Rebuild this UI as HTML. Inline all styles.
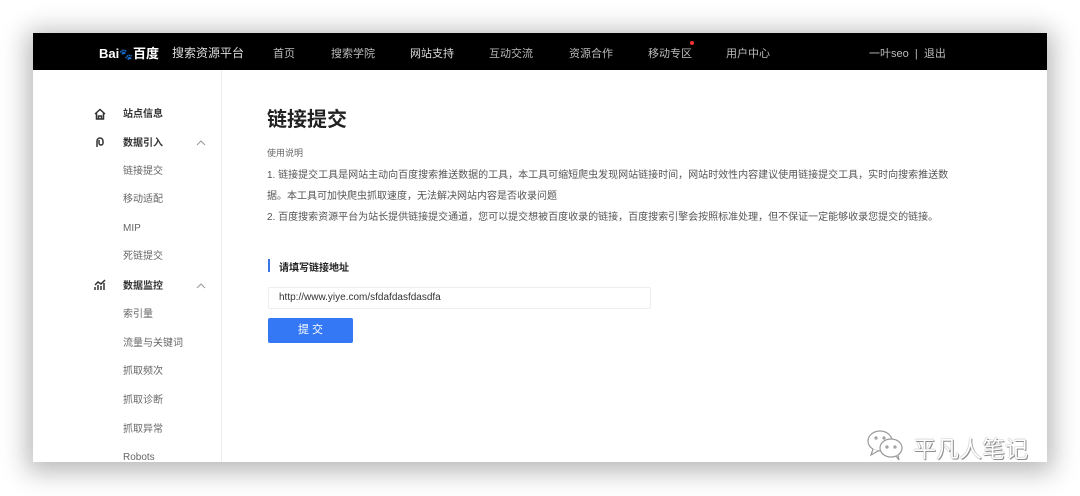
<!DOCTYPE html>
<html><head><meta charset="utf-8"><style>
*{margin:0;padding:0;box-sizing:border-box}
body{width:1080px;height:496px;background:#fff;font-family:"Liberation Sans","Noto Sans CJK SC",sans-serif;position:relative;overflow:hidden}
.box{position:absolute;left:33px;top:33px;width:1014px;height:429px;background:#fff;box-shadow:0 4px 24px 6px rgba(0,0,0,.28);overflow:hidden}
.nav{position:absolute;left:0;top:0;width:100%;height:37px;background:#000;color:#bbb;font-size:11px}
.nav span{position:absolute;top:12px;white-space:nowrap}
.side{position:absolute;left:0;top:39px;width:189px;height:392px;border-right:1px solid #eee}
.side div,.side svg{position:absolute;font-size:10px;color:#666;white-space:nowrap;line-height:14px}
.side .h{font-weight:bold;color:#333}
.main{position:absolute;left:189px;top:37px}
.t{position:absolute;white-space:nowrap}
</style></head><body>
<div class="box">
 <div class="nav">
  <span style="left:66px;top:10px;color:#fff;font-weight:bold;font-size:13px">Bai<span style="position:static;font-size:11px">🐾</span>百度</span>
  <span style="left:139px;color:#ddd;font-size:12px;top:11px">搜索资源平台</span>
  <span style="left:240px">首页</span>
  <span style="left:298px">搜索学院</span>
  <span style="left:377px;color:#ddd">网站支持</span>
  <span style="left:456px">互动交流</span>
  <span style="left:536px">资源合作</span>
  <span style="left:615px">移动专区</span>
  <span style="left:657px;top:8px;width:4px;height:4px;border-radius:2px;background:#e33"></span>
  <span style="left:693px">用户中心</span>
  <span style="left:836px">一叶seo &nbsp;|&nbsp; 退出</span>
 </div>
 <div class="side" style="border-right:none"></div>
 <div style="position:absolute;left:188px;top:37px;width:1px;height:392px;background:#eee"></div>
 <div class="side">
  <svg style="left:60px;top:35px" width="14" height="14" viewBox="0 0 14 14" fill="none" stroke="#333" stroke-width="1.5"><path d="M2 7L7 2.5 12 7M3.5 6v6h7V6"/><path d="M5.5 12V9h3v3"/></svg>
  <div class="h" style="left:90px;top:36px">站点信息</div>
  <svg style="left:60px;top:63px" width="14" height="14" viewBox="0 0 14 14" fill="none" stroke="#333" stroke-width="1.5"><path d="M4 12V6a3 3 0 0 1 6 0v2a2 2 0 0 1-4 0V5"/></svg>
  <div class="h" style="left:90px;top:65px">数据引入</div>
  <svg style="left:163px;top:67px" width="10" height="8" viewBox="0 0 10 8" fill="none" stroke="#999" stroke-width="1"><path d="M1 6l4-4 4 4"/></svg>
  <div style="left:90px;top:93px">链接提交</div>
  <div style="left:90px;top:121px">移动适配</div>
  <div style="left:90px;top:150px">MIP</div>
  <div style="left:90px;top:178px">死链提交</div>
  <svg style="left:60px;top:206px" width="14" height="14" viewBox="0 0 14 14" fill="none" stroke="#333" stroke-width="1.5"><path d="M2 12V9M5 12V7M8 12V8M11 12V5M2 7l3-3 3 2 4-4"/></svg>
  <div class="h" style="left:90px;top:208px">数据监控</div>
  <svg style="left:163px;top:210px" width="10" height="8" viewBox="0 0 10 8" fill="none" stroke="#999" stroke-width="1"><path d="M1 6l4-4 4 4"/></svg>
  <div style="left:90px;top:236px">索引量</div>
  <div style="left:90px;top:265px">流量与关键词</div>
  <div style="left:90px;top:293px">抓取频次</div>
  <div style="left:90px;top:322px">抓取诊断</div>
  <div style="left:90px;top:351px">抓取异常</div>
  <div style="left:90px;top:379px">Robots</div>
 </div>
 <div class="main">
  <div class="t" style="left:45px;top:33px;font-size:20px;font-weight:bold;color:#222">链接提交</div>
  <div class="t" style="left:45px;top:76px;font-size:9px;color:#666">使用说明</div>
  <div class="t" style="left:45px;top:96px;font-size:10px;color:#555">1. 链接提交工具是网站主动向百度搜索推送数据的工具，本工具可缩短爬虫发现网站链接时间，网站时效性内容建议使用链接提交工具，实时向搜索推送数</div>
  <div class="t" style="left:45px;top:117px;font-size:10px;color:#555">据。本工具可加快爬虫抓取速度，无法解决网站内容是否收录问题</div>
  <div class="t" style="left:45px;top:138px;font-size:10px;color:#555">2. 百度搜索资源平台为站长提供链接提交通道，您可以提交想被百度收录的链接，百度搜索引擎会按照标准处理，但不保证一定能够收录您提交的链接。</div>
  <div class="t" style="left:46px;top:189px;width:2px;height:13px;background:#3a75e8"></div>
  <div class="t" style="left:57px;top:189px;font-size:10px;font-weight:bold;color:#222">请填写链接地址</div>
  <div class="t" style="left:46px;top:217px;width:383px;height:22px;border:1px solid #eee;border-radius:2px;font-size:10px;color:#333;padding:4px 10px">http://www.yiye.com/sfdafdasfdasdfa</div>
  <div class="t" style="left:46px;top:248px;width:85px;height:25px;background:#3478f6;border-radius:2px;color:#fff;font-size:11px;text-align:center;line-height:25px">提 交</div>
 </div>
 <svg style="position:absolute;left:832px;top:395px" width="44" height="34" viewBox="0 0 44 34" fill="#fff" stroke="#999" stroke-width="1.2"><ellipse cx="15" cy="13" rx="12" ry="10"/><path d="M8 21l-2 6 7-4"/><ellipse cx="26" cy="20" rx="11" ry="9"/><path d="M31 28l3 4-1-5"/><circle cx="11" cy="10" r="1"/><circle cx="19" cy="10" r="1"/><circle cx="22" cy="19" r="1"/><circle cx="30" cy="19" r="1"/></svg>
 <div class="t" style="left:880px;top:397px;font-size:23px;color:#fff;text-shadow:0 0 1px #555,1px 1px 0 #999">平凡人笔记</div>
</div>
</body></html>
